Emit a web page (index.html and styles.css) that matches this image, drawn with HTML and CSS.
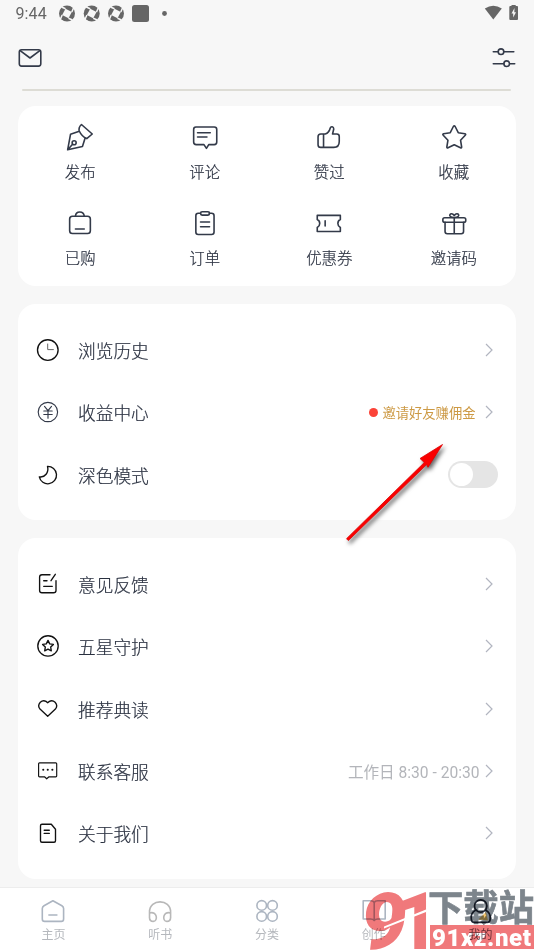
FILE: index.html
```html
<!DOCTYPE html>
<html lang="zh-CN">
<head>
<meta charset="utf-8">
<title>我的</title>
<link rel="stylesheet" href="styles.css">
</head>
<body>
<div class="screen">
  <header class="status">
    <span class="time">9:44</span>
    <svg class="status-left" viewBox="56 0 116 28">
      <defs><g id="swirl"><circle r="8" fill="#666"/><path d="M-1.500-4.800L4.800-1.500L1.500 4.800L-4.800 1.500Z" fill="#f7f7f7"/><path d="M-1.500-4.800L-5.500-6.500M4.800-1.500L6.500-5.500M1.500 4.800L5.500 6.500M-4.800 1.500L-6.500 5.500" stroke="#f7f7f7" stroke-width="1.500"/></g></defs>
      <use href="#swirl" x="67" y="13.5"/><use href="#swirl" x="91.7" y="13.5"/><use href="#swirl" x="116" y="13.5"/>
      <rect x="132" y="5" width="17" height="17" rx="2.5" fill="#666"/><circle cx="164.5" cy="13.5" r="2.4" fill="#666"/>
    </svg>
    <svg class="status-right" viewBox="480 0 44 28">
      <path d="M484.8 8.6Q493.3 2.8 501.8 8.6L493.3 19.6Z" fill="#666"/>
      <path d="M511.500 6V5H515.700V6H517.200Q518 6 518 7V19Q518 20 517 20H510.300Q509.300 20 509.300 19V7Q509.300 6 510.300 6Z" fill="#666"/><path d="M514.500 8L511.500 13.600H513.200V17.500L516 12.200H514.300Z" fill="#f7f7f7"/>
    </svg>
  </header>
  <div class="toolbar">
    <svg class="mail ic" viewBox="15 43 30 30"><rect x="19.300" y="49.800" width="21.500" height="16.300" rx="2.300"/><path d="M20.500 50.800L30 58L39.500 50.800"/></svg>
    <svg class="sliders ic" viewBox="489 43 30 30"><path d="M493.300 51.700H498M504 51.700H513.800M493.300 63.700H503.700M509.700 63.700H514.700"/><circle cx="501" cy="51.700" r="2.800"/><circle cx="506.700" cy="63.700" r="2.800"/></svg>
  </div>
  <div class="rule"></div>

  <section class="card grid">
    <div class="tile"><svg class="ic" viewBox="65.250 123 30 30"><path d="M81.700 124.500L92.500 134L87 138.600Q82 136.500 79.500 131Q78.500 127.500 81.700 124.500ZM79.500 131.200L70.800 134.200L67.900 149.800L82.700 146.500L85.300 138.300M68 149.700L72.800 144.300"/><circle cx="74.400" cy="142.700" r="2"/></svg><span>发布</span></div>
    <div class="tile"><svg class="ic" viewBox="189.750 123 30 30"><path d="M195.700 127H214Q216.500 127 216.500 129.500V142Q216.500 144.600 214 144.600H208.500L206.200 148.400L203.700 144.600H196Q193.400 144.600 193.400 142V129.500Q193.400 127 195.700 127ZM197.300 132.700H210M197.300 137H206.700"/></svg><span>评论</span></div>
    <div class="tile"><svg class="ic" viewBox="314.250 123 30 30"><path d="M321 134H325.500C328.500 133 330 130 330.500 128C331 126.200 334 126 334 129L332.800 134H337Q339.500 134 339.500 136.500V141.500Q339.500 147.400 334 147.400H321Q318.300 147.400 318.300 144.700V136.700Q318.300 134 321 134ZM323.800 134V147.400"/></svg><span>赞过</span></div>
    <div class="tile"><svg class="ic" viewBox="438.750 123 30 30"><path d="M453.100 126.500Q454 125.300 454.900 126.500L458 132.700L464.700 133.700Q466 134.200 465 135.200L460.300 140.200L461.400 147Q461.400 148.300 460.200 147.800L454 144.700L447.800 147.800Q446.600 148.300 446.600 147L447.700 140.200L443 135.200Q442 134.200 443.300 133.700L450 132.700Z"/></svg><span>收藏</span></div>
    <div class="tile"><svg class="ic" viewBox="65.250 209 30 30"><rect x="69.900" y="216.300" width="20.700" height="17.200" rx="2.800"/><path d="M75.700 216.200C76 210.500 84 210.500 84.500 216.200M75.700 229H84.500"/></svg><span>已购</span></div>
    <div class="tile"><svg class="ic" viewBox="189.750 209 30 30"><path d="M200.300 213.300H198Q195.600 213.300 195.600 215.700V232Q195.600 234.500 198 234.500H211.300Q213.800 234.500 213.800 232V215.700Q213.800 213.300 211.300 213.300H209M200.300 222H209.300M200.300 226.700H209.300"/><rect x="200.300" y="211.800" width="9" height="3.300" rx="1.600"/></svg><span>订单</span></div>
    <div class="tile"><svg class="ic" viewBox="314.250 209 30 30"><path d="M317.500 215.400H340.600V219.500C337.300 221 337.300 225.700 340.600 227.500V231.500H317.500V227.500C320.800 225.700 320.800 221 317.500 219.500ZM325.400 220.700V226"/></svg><span>优惠券</span></div>
    <div class="tile"><svg class="ic" viewBox="438.750 209 30 30"><rect x="442.600" y="217.700" width="22.900" height="4.600" rx="1.800"/><path d="M444.800 222.300V231.500Q444.800 233.700 447 233.700H461Q463.300 233.700 463.300 231.500V222.300M454 217.700V233.700M454 217.500C446 217.500 450.500 210.500 454 215.500C457.500 210.500 462 217.500 454 217.500"/></svg><span>邀请码</span></div>
  </section>

  <section class="card list first">
    <div class="row"><svg class="ic black" viewBox="33 335 30 30"><circle cx="47.800" cy="350" r="10.300"/><path class="thin" d="M47.700 344V349.600H53.400"/></svg><b>浏览历史</b><svg class="chev" viewBox="0 0 8 14"><path d="M1 1L7 7L1 13"/></svg></div>
    <div class="row"><svg class="ic fine" viewBox="33 397.300 30 30"><circle cx="47.900" cy="412.300" r="9.700"/><path d="M44.500 406.700L48 411L51.500 406.700M43.800 411.300H52.200M43.800 414.800H52.200M48 411V418.500"/></svg><b>收益中心</b><i class="dot"></i><span class="promo">邀请好友赚佣金</span><svg class="chev" viewBox="0 0 8 14"><path d="M1 1L7 7L1 13"/></svg></div>
    <div class="row"><svg class="ic black" viewBox="33 459.600 30 30"><path d="M47.500 466A8.700 8.700 0 1 1 39.300 476.500C45 477.500 49 472 47.500 466Z"/></svg><b>深色模式</b><span class="switch"></span></div>
  </section>

  <section class="card list second">
    <div class="row"><svg class="ic black" viewBox="33 569 30 30"><path d="M50 574.700H42Q39.600 574.700 39.600 577V590.500Q39.600 592.700 42 592.700H53.500Q56 592.700 56 590.500V580.700M55.300 574.300L51 580.700M43.700 580.700H47M43.700 586.300H52.300"/></svg><b>意见反馈</b><svg class="chev" viewBox="0 0 8 14"><path d="M1 1L7 7L1 13"/></svg></div>
    <div class="row"><svg class="ic black" viewBox="33 631.300 30 30"><circle cx="48" cy="646.200" r="10.200"/><path d="M48 640.700L49.700 644.200L53.400 644.700L50.700 647.400L51.300 651.200L48 649.400L44.700 651.200L45.300 647.400L42.600 644.700L46.300 644.200Z"/></svg><b>五星守护</b><svg class="chev" viewBox="0 0 8 14"><path d="M1 1L7 7L1 13"/></svg></div>
    <div class="row"><svg class="ic black" viewBox="33 693.600 30 30"><path d="M47.700 702.300L46 701Q43 699.500 40.300 701.800Q37.200 705.300 40 708.700L47.700 715.800L55.400 708.700Q58.200 705.300 55.100 701.800Q52.400 699.500 49.400 701Z"/></svg><b>推荐典读</b><svg class="chev" viewBox="0 0 8 14"><path d="M1 1L7 7L1 13"/></svg></div>
    <div class="row"><svg class="ic fine black" viewBox="33 755.900 30 30"><path d="M39.500 762.700H55.800Q56.700 762.700 56.700 763.700V776Q56.700 776.700 55.800 776.700H49L46.700 778.700L44.500 776.700H39.500Q38.600 776.700 38.600 776V763.700Q38.600 762.700 39.500 762.700Z"/><path class="dots" d="M43.200 769.700h.1M47.700 769.700h.1M52.300 769.700h.1"/></svg><b>联系客服</b><span class="hours">工作日 8:30 - 20:30</span><svg class="chev" viewBox="0 0 8 14"><path d="M1 1L7 7L1 13"/></svg></div>
    <div class="row"><svg class="ic black" viewBox="33 818.300 30 30"><path d="M42 824.500H51.300L55.500 829.500V841Q55.500 842.500 54 842.500H42Q40.500 842.500 40.500 841V826Q40.500 824.500 42 824.500ZM44.200 830.500H49.300M44.200 833.700H49.300"/></svg><b>关于我们</b><svg class="chev" viewBox="0 0 8 14"><path d="M1 1L7 7L1 13"/></svg></div>
  </section>

  <nav class="tabs">
    <div class="tab"><svg class="ic" viewBox="38.400 895 30 30"><path d="M53.300 899.800L62.300 904.700Q64 905.700 64 907.500V918Q64 920.400 61.700 920.400H45Q42.700 920.400 42.700 918V907.500Q42.700 905.700 44.400 904.700ZM49.300 914H57.300"/></svg><span>主页</span></div>
    <div class="tab gray"><svg class="ic" viewBox="145.200 895 30 30"><path d="M149.700 917V911C149.700 897.500 170.800 897.500 170.800 911V917M149.700 912C157.500 909.500 158.500 920.400 153.500 920.400Q149.700 920.400 149.700 916.500M170.800 912C163 909.500 162 920.400 167 920.400Q170.800 920.400 170.800 916.500"/></svg><span>听书</span></div>
    <div class="tab"><svg class="ic" viewBox="252 895 30 30"><circle cx="261.700" cy="904.400" r="4.800"/><circle cx="272.500" cy="904.400" r="4.800"/><circle cx="261.700" cy="915.400" r="4.800"/><circle cx="272.500" cy="915.400" r="4.800"/></svg><span>分类</span></div>
    <div class="tab"><svg class="ic" viewBox="358.800 895 30 30"><path d="M374 901.500Q373 899.700 370.500 899.700H363V918H370.500Q373 918 374 919.500Q375 918 377.500 918H385V899.700H377.500Q375 899.700 374 901.500V919"/></svg><span>创作</span></div>
    <div class="tab me"><svg class="ic" viewBox="465.600 895 30 30"><path class="spark" d="M478 918.500L485.500 911L487.500 919.500Z"/><circle cx="480.300" cy="905" r="6.200"/><path d="M475.500 909C469 912.500 471 917 471 918.500Q471 921.300 474 921.300H486.700Q489.700 921.300 489.700 918.500C489.700 917 491.500 912.500 485 909"/></svg><span>我的</span></div>
  </nav>

  <svg class="arrow" viewBox="340 438 112 112"><path d="M346.500 538.700L424.300 462.500L420 458.500L442.500 444.500L428 467.300L426.600 464.600L348.300 540.600Z"/></svg>

  <svg class="mark" viewBox="360 885 174 65">
    <g fill="#f0797b">
      <text class="nine" transform="translate(358.500 948.500) skewX(-7)">9</text>
      <text class="nine" transform="translate(397 948.500) scale(.9 1)">1</text>
      <rect x="430" y="925" width="104" height="24"/>
    </g>
    <path d="M384 926.500L426 909.500V912L384 928.500Z" fill="#fff"/>
    <text class="cn" x="428" y="920.500" textLength="106" lengthAdjust="spacingAndGlyphs">下载站</text>
    <text class="url" x="432" y="946" textLength="99" lengthAdjust="spacing">91xz.net</text>
  </svg>
</div>
</body>
</html>
```
FILE: styles.css
```css
* { box-sizing: border-box; }
body { margin: 0; background: #f7f7f7; font-family: Roboto, "Noto Sans CJK SC", sans-serif; color: #2a3140; }
.screen { position: relative; width: 534px; height: 950px; overflow: hidden; display: flex; flex-direction: column; }
svg { display: block; flex: none; }
.status { height: 28px; display: flex; align-items: center; padding: 0 10px 0 15.500px; color: #666; }
.time { width: 40.500px; font-size: 16px; line-height: 28px; letter-spacing: .1px; }
.status-left { width: 116px; height: 28px; }
.status-right { width: 44px; height: 28px; margin-left: auto; }
.toolbar { height: 61px; padding: 15px 15px 0; display: flex; justify-content: space-between; }
.ic { width: 30px; height: 30px; fill: none; stroke: #333a49; stroke-width: 1.600; stroke-linejoin: round; stroke-linecap: round; }
.rule { height: 1.500px; margin: 0 23px 15.500px 22px; background: #dddcd5; border-radius: 1px; }
.card { margin: 0 18px; background: #fff; border-radius: 18px; flex: none; }
.grid { height: 180px; display: grid; grid-template-columns: repeat(4, 1fr); grid-auto-rows: 86px; padding-top: 17px; }
.tile { display: flex; flex-direction: column; align-items: center; font-size: 15.400px; line-height: 22px; font-weight: 300; }
.tile span { margin-top: 9px; }
.first { height: 216px; margin-top: 18px; padding-top: 15px; }
.second { height: 341px; margin-top: 18px; padding-top: 15px; }
.row { height: 62.300px; display: flex; align-items: center; padding: 0 23px 0 15px; }
.row b { font-weight: 300; font-size: 17.700px; line-height: 26px; margin: 4px auto 0 15px; }
.tile span, .row b { -webkit-text-stroke: .2px #2a3140; }
.black { stroke: #111; stroke-width: 1.350; }
.fine { stroke-width: 1.150; }
.thin { stroke: #666; stroke-width: 1; }
.dots { stroke-width: 2; }
.chev { width: 8px; height: 14px; margin-left: 9.500px; fill: none; stroke: #b2b5c0; stroke-width: 1.200; }
.dot { width: 9.400px; height: 9.400px; border-radius: 50%; background: #fb4338; margin-right: 4.500px; }
.promo { font-size: 13.300px; color: #cd9a45; }
.hours { font-size: 15.600px; color: #b3b5ba; margin-right: -4px; }
.switch { width: 50px; height: 27px; border-radius: 14px; background: #e5e5e5; padding: 2px; margin-right: -5px; }
.switch::before { content: ""; display: block; width: 23px; height: 23px; border-radius: 50%; background: #fff; }
.tabs { margin-top: 8px; height: 63px; flex: none; background: #fff; border-top: 1px solid #ededed; display: grid; grid-template-columns: repeat(5, 1fr); }
.tab { display: flex; flex-direction: column; align-items: center; padding-top: 7.500px; font-size: 12px; line-height: 16px; color: #b5b8bd; }
.tab span { margin-top: 1px; }
.tab .ic { stroke: #acb5c1; }
.tab.gray .ic { stroke: #b8b8b8; }
.tab.me .ic { stroke: #232a39; stroke-width: 1.700; }
.tab.me { color: #70606a; }
.tab .spark { fill: #f6c66c; stroke: none; }
.arrow { position: absolute; left: 340px; top: 438px; width: 112px; height: 112px; fill: #fa0000; stroke: #d00; stroke-width: .8; filter: drop-shadow(2px 3px 2px rgba(0,0,0,.6)); }
.mark { position: absolute; left: 360px; top: 885px; width: 174px; height: 65px; mix-blend-mode: multiply; }
.nine { font: 900 79px Roboto, sans-serif; }
.cn { font: 700 36px "Noto Sans CJK SC", sans-serif; fill: #7d858c; stroke: #7d858c; stroke-width: .7; }
.url { font: 900 24px Roboto, sans-serif; fill: #fff; }
```
